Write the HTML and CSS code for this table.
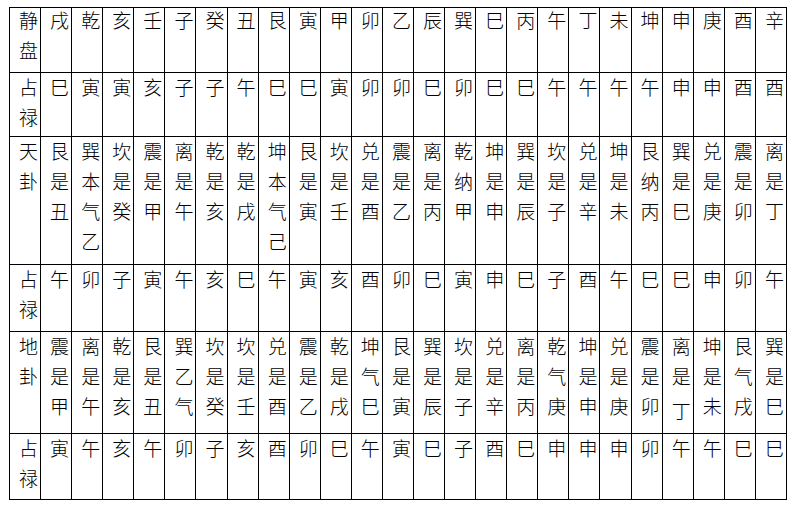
FILE: index.html
```html
<!DOCTYPE html>
<html lang="zh-CN">
<head>
<meta charset="utf-8">
<title>静盘占禄</title>
<link rel="stylesheet" href="styles.css">
</head>
<body>
<table class="grid">
  <tr class="r1">
    <td><div class="c">静<br>盘</div></td>
    <td><div class="c">戌</div></td><td><div class="c">乾</div></td><td><div class="c">亥</div></td><td><div class="c">壬</div></td><td><div class="c">子</div></td><td><div class="c">癸</div></td><td><div class="c">丑</div></td><td><div class="c">艮</div></td><td><div class="c">寅</div></td><td><div class="c">甲</div></td><td><div class="c">卯</div></td><td><div class="c">乙</div></td><td><div class="c">辰</div></td><td><div class="c">巽</div></td><td><div class="c">巳</div></td><td><div class="c">丙</div></td><td><div class="c">午</div></td><td><div class="c">丁</div></td><td><div class="c">未</div></td><td><div class="c">坤</div></td><td><div class="c">申</div></td><td><div class="c">庚</div></td><td><div class="c">酉</div></td><td><div class="c">辛</div></td>
  </tr>
  <tr class="r2">
    <td><div class="c">占<br>禄</div></td>
    <td><div class="c">巳</div></td><td><div class="c">寅</div></td><td><div class="c">寅</div></td><td><div class="c">亥</div></td><td><div class="c">子</div></td><td><div class="c">子</div></td><td><div class="c">午</div></td><td><div class="c">巳</div></td><td><div class="c">巳</div></td><td><div class="c">寅</div></td><td><div class="c">卯</div></td><td><div class="c">卯</div></td><td><div class="c">巳</div></td><td><div class="c">卯</div></td><td><div class="c">巳</div></td><td><div class="c">巳</div></td><td><div class="c">午</div></td><td><div class="c">午</div></td><td><div class="c">午</div></td><td><div class="c">午</div></td><td><div class="c">申</div></td><td><div class="c">申</div></td><td><div class="c">酉</div></td><td><div class="c">酉</div></td>
  </tr>
  <tr class="r3">
    <td><div class="c">天<br>卦</div></td>
    <td><div class="c">艮<br>是<br>丑</div></td><td><div class="c">巽<br>本<br>气<br>乙</div></td><td><div class="c">坎<br>是<br>癸</div></td><td><div class="c">震<br>是<br>甲</div></td><td><div class="c">离<br>是<br>午</div></td><td><div class="c">乾<br>是<br>亥</div></td><td><div class="c">乾<br>是<br>戌</div></td><td><div class="c">坤<br>本<br>气<br>己</div></td><td><div class="c">艮<br>是<br>寅</div></td><td><div class="c">坎<br>是<br>壬</div></td><td><div class="c">兑<br>是<br>酉</div></td><td><div class="c">震<br>是<br>乙</div></td><td><div class="c">离<br>是<br>丙</div></td><td><div class="c">乾<br>纳<br>甲</div></td><td><div class="c">坤<br>是<br>申</div></td><td><div class="c">巽<br>是<br>辰</div></td><td><div class="c">坎<br>是<br>子</div></td><td><div class="c">兑<br>是<br>辛</div></td><td><div class="c">坤<br>是<br>未</div></td><td><div class="c">艮<br>纳<br>丙</div></td><td><div class="c">巽<br>是<br>巳</div></td><td><div class="c">兑<br>是<br>庚</div></td><td><div class="c">震<br>是<br>卯</div></td><td><div class="c">离<br>是<br>丁</div></td>
  </tr>
  <tr class="r4">
    <td><div class="c">占<br>禄</div></td>
    <td><div class="c">午</div></td><td><div class="c">卯</div></td><td><div class="c">子</div></td><td><div class="c">寅</div></td><td><div class="c">午</div></td><td><div class="c">亥</div></td><td><div class="c">巳</div></td><td><div class="c">午</div></td><td><div class="c">寅</div></td><td><div class="c">亥</div></td><td><div class="c">酉</div></td><td><div class="c">卯</div></td><td><div class="c">巳</div></td><td><div class="c">寅</div></td><td><div class="c">申</div></td><td><div class="c">巳</div></td><td><div class="c">子</div></td><td><div class="c">酉</div></td><td><div class="c">午</div></td><td><div class="c">巳</div></td><td><div class="c">巳</div></td><td><div class="c">申</div></td><td><div class="c">卯</div></td><td><div class="c">午</div></td>
  </tr>
  <tr class="r5">
    <td><div class="c">地<br>卦</div></td>
    <td><div class="c">震<br>是<br>甲</div></td><td><div class="c">离<br>是<br>午</div></td><td><div class="c">乾<br>是<br>亥</div></td><td><div class="c">艮<br>是<br>丑</div></td><td><div class="c">巽<br>乙<br>气</div></td><td><div class="c">坎<br>是<br>癸</div></td><td><div class="c">坎<br>是<br>壬</div></td><td><div class="c">兑<br>是<br>酉</div></td><td><div class="c">震<br>是<br>乙</div></td><td><div class="c">乾<br>是<br>戌</div></td><td><div class="c">坤<br>气<br>巳</div></td><td><div class="c">艮<br>是<br>寅</div></td><td><div class="c">巽<br>是<br>辰</div></td><td><div class="c">坎<br>是<br>子</div></td><td><div class="c">兑<br>是<br>辛</div></td><td><div class="c">离<br>是<br>丙</div></td><td><div class="c">乾<br>气<br>庚</div></td><td><div class="c">坤<br>是<br>申</div></td><td><div class="c">兑<br>是<br>庚</div></td><td><div class="c">震<br>是<br>卯</div></td><td><div class="c">离<br>是<br><span class="low">丁</span></div></td><td><div class="c">坤<br>是<br>未</div></td><td><div class="c">艮<br>气<br>戌</div></td><td><div class="c">巽<br>是<br>巳</div></td>
  </tr>
  <tr class="r6">
    <td><div class="c">占<br>禄</div></td>
    <td><div class="c">寅</div></td><td><div class="c">午</div></td><td><div class="c">亥</div></td><td><div class="c">午</div></td><td><div class="c">卯</div></td><td><div class="c">子</div></td><td><div class="c">亥</div></td><td><div class="c">酉</div></td><td><div class="c">卯</div></td><td><div class="c">巳</div></td><td><div class="c">午</div></td><td><div class="c">寅</div></td><td><div class="c">巳</div></td><td><div class="c">子</div></td><td><div class="c">酉</div></td><td><div class="c">巳</div></td><td><div class="c">申</div></td><td><div class="c">申</div></td><td><div class="c">申</div></td><td><div class="c">卯</div></td><td><div class="c">午</div></td><td><div class="c">午</div></td><td><div class="c">巳</div></td><td><div class="c">巳</div></td>
  </tr>
</table>
</body>
</html>
```

FILE: styles.css
```css
html, body {
  margin: 0;
  padding: 0;
  background: #ffffff;
}

body {
  font-family: "Noto Sans CJK SC", "Noto Sans CJK JP", sans-serif;
  color: #000000;
}

.grid {
  margin: 7px 0 0 9px;
  border-collapse: collapse;
  table-layout: fixed;
  width: 778px;
}

.grid td {
  border: 1px solid #000000;
  padding: 0 0 0 9px;
  vertical-align: top;
  font-size: 19px;
  font-weight: 300;
  line-height: 30px;
  overflow: hidden;
}

.c {
  margin-top: -1px;
}

.r1 .c {
  margin-top: -3px;
}

.r1 td { height: 64px; }
.r2 td { height: 63px; }
.r3 td { height: 127px; }
.r4 td { height: 66px; }
.r5 td { height: 101px; }
.r6 td { height: 65px; }

.low {
  display: inline-block;
  transform: translateY(5px);
}
```
